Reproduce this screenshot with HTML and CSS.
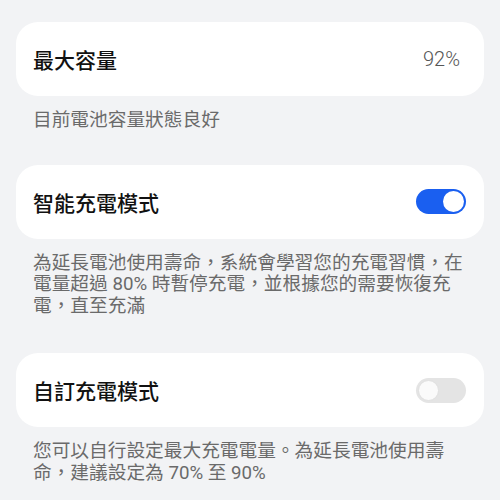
FILE: index.html
```html
<!DOCTYPE html>
<html lang="zh-Hant">
<head>
<meta charset="utf-8">
<link rel="stylesheet" href="styles.css">
</head>
<body>
<main class="page">
  <section class="group">
    <div class="card">
      <span class="title">最大容量</span>
      <span class="value">92%</span>
    </div>
    <p class="caption">目前電池容量狀態良好</p>
  </section>
  <section class="group">
    <div class="card">
      <span class="title">智能充電模式</span>
      <span class="switch on"><span class="knob"></span></span>
    </div>
    <p class="caption long">為延長電池使用壽命，系統會學習您的充電習慣，在電量超過 80% 時暫停充電，並根據您的需要恢復充電，直至充滿</p>
  </section>
  <section class="group">
    <div class="card">
      <span class="title">自訂充電模式</span>
      <span class="switch off"><span class="knob"></span></span>
    </div>
    <p class="caption">您可以自行設定最大充電電量。為延長電池使用壽命，建議設定為 70% 至 90%</p>
  </section>
</main>
</body>
</html>
```

FILE: styles.css
```css
html, body {
  margin: 0;
  padding: 0;
  background: #f2f3f5;
}
body {
  font-family: Roboto, "Noto Sans CJK TC", sans-serif;
}
.page {
  padding-top: 22px;
  display: flex;
  flex-direction: column;
}
.card {
  margin: 0 16px;
  height: 74px;
  box-sizing: border-box;
  background: #ffffff;
  border-radius: 22px;
  display: flex;
  align-items: center;
  justify-content: space-between;
  padding: 0 18px 0 17px;
}
.title {
  font-size: 21px;
  font-weight: 500;
  color: #111111;
}
.value {
  font-size: 20px;
  font-weight: 300;
  color: #555555;
  margin-right: 6px;
}
.caption {
  margin: 0;
  padding: 14px 33px 33px 33px;
  font-size: 18.7px;
  line-height: 21.6px;
  color: #6a6a6a;
}
.caption.long {
  padding-bottom: 36px;
}
.switch {
  width: 50px;
  height: 25px;
  border-radius: 13px;
  box-sizing: border-box;
  display: flex;
  align-items: center;
  padding: 0 2px;
}
.switch.on {
  background: #1a5ff0;
  justify-content: flex-end;
}
.switch.off {
  background: #e4e4e4;
  justify-content: flex-start;
}
.knob {
  width: 21px;
  height: 21px;
  border-radius: 50%;
  background: #ffffff;
  box-sizing: border-box;
}
.switch.off .knob {
  background: #fafafa;
  border: 1px solid #e0e0e0;
}
```
